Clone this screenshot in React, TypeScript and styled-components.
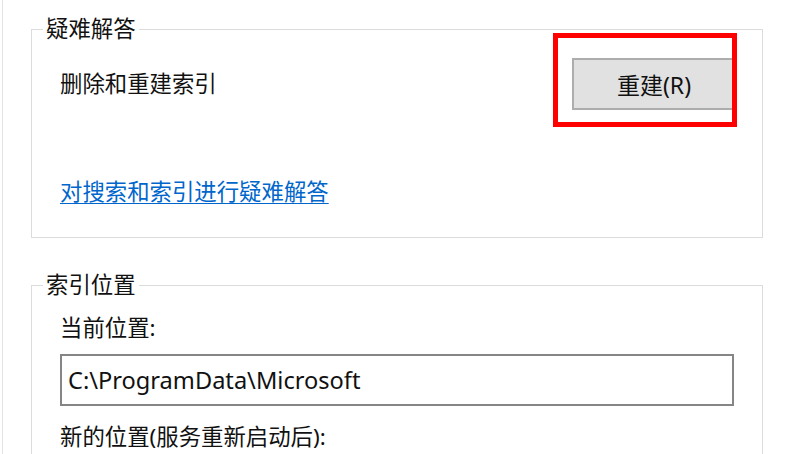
import React from "react";
import styled, { createGlobalStyle } from "styled-components";

const Global = createGlobalStyle`
  html, body { margin: 0; padding: 0; background: #ffffff; }
  body {
    font-family: "Noto Sans", "Noto Sans CJK SC", sans-serif;
    color: #111111;
    overflow: hidden;
  }
`;

const Page = styled.div`
  width: 800px;
  height: 454px;
  box-sizing: border-box;
  padding-left: 2px;
  overflow: hidden;
`;

const Panel = styled.div`
  height: 100%;
  box-sizing: border-box;
  border-left: 1px solid #e2e2e2;
  padding: 14px 37px 0 28px;
  display: flex;
  flex-direction: column;
  gap: 32px;
`;

const Group = styled.fieldset`
  margin: 0;
  padding: 0;
  border: 1px solid #dcdcdc;
  min-width: 0;
`;

const Legend = styled.legend`
  margin-left: 11px;
  padding: 0 3px;
  font-size: 22.4px;
  line-height: 30px;
  color: #111111;
`;

const GroupBody = styled.div<{ $bottom: number }>`
  display: flex;
  flex-direction: column;
  padding: 0 26px ${(p) => p.$bottom}px 28px;
`;

const Row = styled.div<{ $top: number }>`
  display: flex;
  align-items: center;
  justify-content: space-between;
  margin-top: ${(p) => p.$top}px;
`;

const Label = styled.div<{ $top?: number }>`
  font-size: 22.4px;
  line-height: 30px;
  margin-top: ${(p) => p.$top ?? 0}px;
  white-space: nowrap;
`;

const ButtonWrap = styled.div`
  position: relative;
`;

const Button = styled.button`
  width: 164px;
  height: 52px;
  box-sizing: border-box;
  background: #e1e1e1;
  border: 2px solid #adadad;
  font-family: "Noto Sans", "Noto Sans CJK SC", sans-serif;
  font-size: 23px;
  color: #111111;
  padding: 0;
  display: flex;
  align-items: center;
  justify-content: center;
`;

const Highlight = styled.div`
  position: absolute;
  top: -25px;
  left: -19px;
  right: -1px;
  bottom: -17px;
  border: 5px solid #ff0000;
  pointer-events: none;
`;

const Link = styled.a`
  align-self: flex-start;
  margin-top: 67px;
  font-size: 22.4px;
  line-height: 30px;
  color: #0066cc;
  text-decoration: underline;
  text-underline-offset: 3px;
  text-decoration-thickness: 1px;
`;

const PathBox = styled.div`
  margin-top: 11px;
  height: 52px;
  box-sizing: border-box;
  border: 2px solid #858585;
  padding: 0 6px;
  display: flex;
  align-items: center;
  font-size: 23.6px;
  margin-right: 2px;
`;

export default function App() {
  return (
    <>
      <Global />
      <Page>
        <Panel>
          <Group>
            <Legend>疑难解答</Legend>
            <GroupBody $bottom={30}>
              <Row $top={14}>
                <Label>删除和重建索引</Label>
                <ButtonWrap>
                  <Button>重建(R)</Button>
                  <Highlight />
                </ButtonWrap>
              </Row>
              <Link href="#">对搜索和索引进行疑难解答</Link>
            </GroupBody>
          </Group>
          <Group>
            <Legend>索引位置</Legend>
            <GroupBody $bottom={20}>
              <Label $top={13}>当前位置:</Label>
              <PathBox>C:\ProgramData\Microsoft</PathBox>
              <Label $top={16}>新的位置(服务重新启动后):</Label>
            </GroupBody>
          </Group>
        </Panel>
      </Page>
    </>
  );
}
